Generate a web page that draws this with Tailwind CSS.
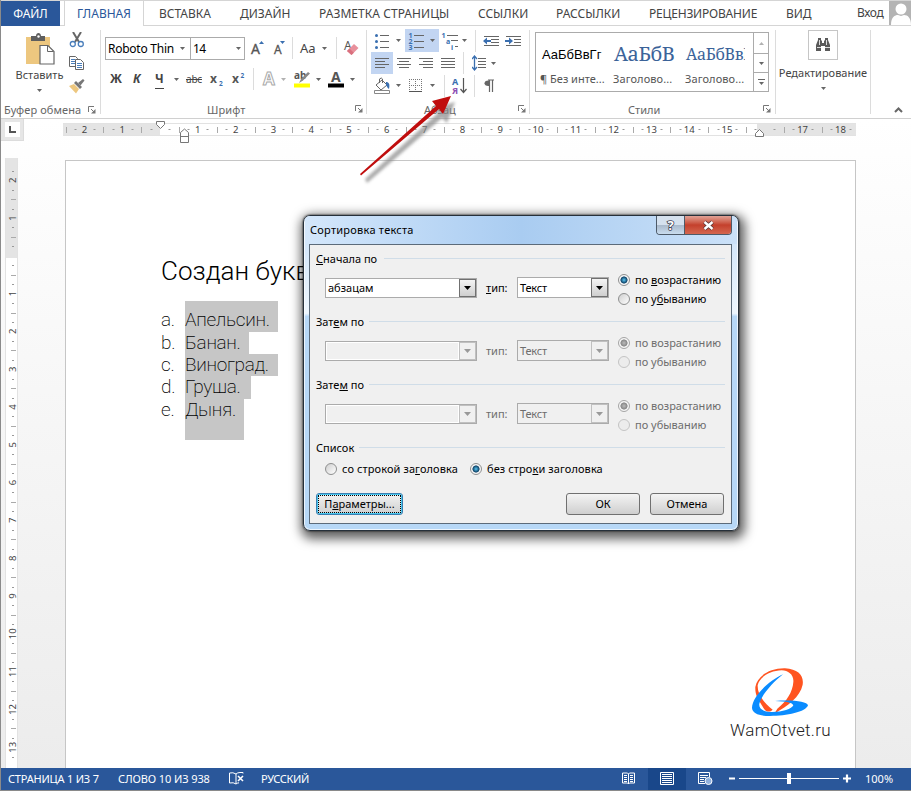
<!DOCTYPE html>
<html lang="ru">
<head>
<meta charset="utf-8">
<title>Word</title>
<script src="https://cdn.jsdelivr.net/npm/@tailwindcss/browser@4"></script>
</head>
<body class="w-[911px] h-[791px] overflow-hidden bg-white font-['Noto_Sans',sans-serif] text-[12px] leading-none text-[#444] whitespace-nowrap">
<svg width="0" height="0" class="absolute">
  <defs>
    <symbol id="dn" viewBox="0 0 5 3"><path d="M0 0h5L2.500 3z" fill="#666"/></symbol>
    <symbol id="launch" viewBox="0 0 8 8"><path d="M.5 6V.5H6M3 3l3 3" fill="none" stroke="#777"/><path d="M7.500 3v4.500H3z" fill="#777"/></symbol>
  </defs>
</svg>
<div class="relative flex flex-col w-full h-full border-l border-[#8a8a8a]">

  <!-- tabs -->
  <nav class="flex h-[26px] shrink-0 border-t border-[#d5d5d5]">
    <div class="flex items-center justify-center w-[59px] pt-px bg-[#2a579a] text-white">ФАЙЛ</div>
    <div class="w-[4px] border-b border-[#d5d5d5]"></div>
    <div class="flex items-center justify-center w-[80px] pt-px border-x border-[#d5d5d5] text-[#2a579a]">ГЛАВНАЯ</div>
    <div class="flex flex-1 items-center border-b border-[#d5d5d5] pl-[15px]">
      <div class="w-[81px] pt-px">ВСТАВКА</div>
      <div class="w-[79px] pt-px">ДИЗАЙН</div>
      <div class="w-[159px] pt-px tracking-[0.05px]">РАЗМЕТКА СТРАНИЦЫ</div>
      <div class="w-[78px] pt-px">ССЫЛКИ</div>
      <div class="w-[93px] pt-px">РАССЫЛКИ</div>
      <div class="w-[137px] pt-px tracking-[-0.2px]">РЕЦЕНЗИРОВАНИЕ</div>
      <div class="w-[71px] pt-px">ВИД</div>
      <div class="w-[32px] tracking-[-0.4px]">Вход</div>
      <svg width="22" height="24" viewBox="0 0 22 24"><path fill="#b4b4b4" d="M0 0h22v24H0z"/><circle cx="12" cy="8" r="5.500" fill="#fff"/><path d="M2 24c0-8 4-10 7-10l3 1 3-1c4 0 7 3 7 10z" fill="#fff"/></svg>
    </div>
  </nav>

  <!-- ribbon -->
  <section class="flex h-[93px] shrink-0 border-b border-[#d0d0d0] bg-white text-[11px]">
    <!-- clipboard -->
    <div class="flex flex-col w-[99px] pt-[6px]">
      <div class="flex h-[71px]">
        <div class="flex flex-col items-center w-[63px] pl-[14px]">
          <svg width="30" height="32" viewBox="0 0 30 32" class="mt-[1px]"><path d="M1 4h24v27H1z" fill="#edc77f"/><path d="M6 3h5c0-4 5-4 5 0h4v5H6z" fill="#5e5e5e"/><circle cx="13.500" cy="3.500" r="1.200" fill="#fff"/><path d="M15 12.500h8l6 6V31H15z" fill="#fff" stroke="#666" stroke-width="1.200"/><path d="M22.500 12.500v6h6" fill="none" stroke="#666"/></svg>
          <span class="mt-[4px]">Вставить</span>
          <svg width="5" height="3" class="mt-[9px]"><use href="#dn"/></svg>
        </div>
        <div class="flex flex-col items-center w-[26px] gap-[7px]">
          <svg width="16" height="16" viewBox="0 0 16 16"><path d="M4 0l6 10M12 0L6 10" stroke="#666" stroke-width="2" fill="none"/><circle cx="3.800" cy="12" r="2.500" fill="none" stroke="#4a7ebb" stroke-width="1.300"/><circle cx="11.800" cy="12" r="2.500" fill="none" stroke="#4a7ebb" stroke-width="1.300"/></svg>
          <svg width="16" height="16" viewBox="0 0 16 16"><path d="M.5 1.500h6l2 2v8h-8z" fill="#fff" stroke="#666"/><path d="M2 4.500h4M2 6.500h4M2 8.500h4" stroke="#4a7ebb"/><path d="M6.500 4.500h5l3 3v7h-8z" fill="#fff" stroke="#666"/><path d="M8 8.500h5M8 10.500h5M8 12.500h5" stroke="#4a7ebb"/></svg>
          <svg width="16" height="16" viewBox="0 0 16 16"><path d="M0 8l5-2 5 5-3 4.500z" fill="#edc77f"/><path d="M5 5l2-2 6 6-2 2z" fill="#777"/><path d="M9 5l5-4 1.500 1.500-4 5z" fill="#777"/></svg>
        </div>
      </div>
      <div class="flex items-center h-[13px] pl-[3px] text-[#666]"><div class="w-[84px] tracking-[0.1px]">Буфер обмена</div><svg width="8" height="8"><use href="#launch"/></svg></div>
    </div>
    <div class="w-px h-[84px] mt-[4px] bg-[#dcdcdc]"></div>

    <!-- font -->
    <div class="flex flex-col w-[265px]">
      <div class="flex items-center h-[44px] pl-[4px]">
        <div class="flex items-center w-[86px] h-[23px] border border-[#ababab] pl-[2px] pt-px text-[12px] tracking-[-0.25px] text-black"><div class="w-[72px]">Roboto Thin</div><svg width="5" height="3"><use href="#dn"/></svg></div>
        <div class="flex items-center w-[55px] h-[23px] -ml-px border border-[#ababab] pl-[2px] pt-px text-[12px] tracking-[-0.6px] text-black"><div class="w-[43px]">14</div><svg width="5" height="3"><use href="#dn"/></svg></div>
        <svg width="14" height="16" viewBox="0 0 14 16" class="ml-[6px] overflow-visible"><text x="0" y="14" font-size="14" fill="#555" stroke="#555" stroke-width=".3">A</text><path d="M8 4l2.500-3L13 4z" fill="#3a6fb0"/></svg>
        <svg width="14" height="16" viewBox="0 0 14 16" class="ml-[9px] overflow-visible"><text x="0" y="14" font-size="12" fill="#555" stroke="#555" stroke-width=".3">A</text><path d="M6 1h5L8.500 4z" fill="#3a6fb0"/></svg>
        <div class="w-px h-[22px] ml-[4px] bg-[#dcdcdc]"></div>
        <span class="ml-[7px] w-[22px] text-[13px]">Aa</span><svg width="5" height="3"><use href="#dn"/></svg>
        <div class="w-px h-[22px] ml-[9px] bg-[#dcdcdc]"></div>
        <svg width="15" height="16" viewBox="0 0 15 16" class="ml-[7px] overflow-visible"><text x="0" y="10" font-size="12" fill="#555">A</text><path d="M3 11l7-7 4.500 4-7 7z" fill="#e8909c"/><path d="M3 11l2.500-2.500 4.300 4.200L7.500 15z" fill="#d9707e"/></svg>
      </div>
      <div class="flex items-center h-[18px] pl-[9px] text-[13px]">
        <div class="w-[23px] font-bold text-[12px]">Ж</div>
        <div class="w-[22px] font-bold italic text-[12px]">К</div>
        <div class="w-[19px] font-bold text-[12px]"><span class="border-b border-[#444] pb-px">Ч</span></div>
        <svg width="5" height="3"><use href="#dn"/></svg>
        <div class="w-[24px] ml-[7px] text-[10px] tracking-[-0.2px] line-through">abc</div>
        <svg width="14" height="16" viewBox="0 0 14 16" class="overflow-visible"><text x="0" y="12" font-size="12" font-weight="bold" fill="#555">x</text><text x="9" y="15" font-size="6.500" font-weight="bold" fill="#3a6fb0">2</text></svg>
        <svg width="14" height="16" viewBox="0 0 14 16" class="ml-[8px] overflow-visible"><text x="0" y="12" font-size="12" font-weight="bold" fill="#555">x</text><text x="8.500" y="6.500" font-size="6.500" font-weight="bold" fill="#3a6fb0">2</text></svg>
        <div class="w-px h-[22px] ml-[7px] bg-[#dcdcdc]"></div>
        <svg width="14" height="18" viewBox="0 0 14 18" class="ml-[8px] overflow-visible"><text x="1" y="15" font-size="17" font-weight="bold" fill="#fff" stroke="#aaa" stroke-width="1">A</text></svg>
        <svg width="5" height="3" class="ml-[5px] opacity-50"><use href="#dn"/></svg>
        <svg width="17" height="18" viewBox="0 0 17 18" class="ml-[8px] overflow-visible"><text x="0" y="9" font-size="10" font-weight="bold" fill="#555">ab</text><path d="M5 13l2-4 7-7 2 1.500-7 7z" fill="#888"/><path d="M0 13.500h16v4H0z" fill="#ff0"/></svg>
        <svg width="5" height="3" class="ml-[5px]"><use href="#dn"/></svg>
        <svg width="16" height="18" viewBox="0 0 16 18" class="ml-[7px] overflow-visible"><text x="3" y="12" font-size="14" font-weight="bold" fill="#555">A</text><path d="M0 13.500h16v4H0z" fill="#000"/></svg>
        <svg width="5" height="3" class="ml-[6px]"><use href="#dn"/></svg>
      </div>
      <div class="flex items-center h-[14px] mt-[14px] pl-[106px] text-[#666]"><div class="w-[148px] tracking-[0.1px]">Шрифт</div><svg width="8" height="8"><use href="#launch"/></svg></div>
    </div>
    <div class="w-px h-[84px] mt-[4px] bg-[#dcdcdc]"></div>

    <!-- paragraph -->
    <div class="flex flex-col w-[162px] pt-[3px]">
      <div class="flex items-center h-[23px] pl-[8px]">
        <svg width="14" height="16" viewBox="0 0 14 16"><path d="M5 2.500h9M5 8.500h9M5 14.500h9" stroke="#666"/><circle cx="1.500" cy="2.500" r="1.500" fill="#3a6fb0"/><circle cx="1.500" cy="8.500" r="1.500" fill="#3a6fb0"/><circle cx="1.500" cy="14.500" r="1.500" fill="#3a6fb0"/></svg>
        <svg width="5" height="3" class="ml-[7px]"><use href="#dn"/></svg>
        <div class="flex items-center w-[34px] h-[23px] ml-[4px] pl-[4px] bg-[#c2d5f2]">
          <svg width="15" height="18" viewBox="0 0 15 18" class="overflow-visible"><path d="M5 3.500h10M5 9.500h10M5 15.500h10" stroke="#666"/><g font-size="7" font-weight="bold" fill="#3a6fb0"><text x="-.5" y="6">1</text><text x="-.5" y="12">2</text><text x="-.5" y="18">3</text></g></svg>
          <svg width="5" height="3" class="ml-[6px]"><use href="#dn"/></svg>
        </div>
        <svg width="18" height="18" viewBox="0 0 18 18" class="ml-[3px] overflow-visible"><path d="M5 3.500h11M9 8.500h7M13 14.500h3" stroke="#666"/><g font-size="7" font-weight="bold" fill="#3a6fb0"><text x="-.5" y="6">1</text><text x="4" y="12">a</text><text x="9" y="18">i</text></g></svg>
        <svg width="5" height="3" class="ml-[2px]"><use href="#dn"/></svg>
        <div class="w-px h-[22px] ml-[8px] bg-[#dcdcdc]"></div>
        <svg width="16" height="12" viewBox="0 0 16 12" class="ml-[7px]"><path d="M1 1.500h15M8 4.500h8M8 7.500h8M1 10.500h15" stroke="#666"/><path d="M0 6l4-3.500V5h4v2H4v2.500z" fill="#3a6fb0"/></svg>
        <svg width="16" height="12" viewBox="0 0 16 12" class="ml-[6px]"><path d="M1 1.500h15M9 4.500h7M9 7.500h7M1 10.500h15" stroke="#666"/><path d="M8 6L4 2.500V5H0v2h4v2.500z" fill="#3a6fb0"/></svg>
      </div>
      <div class="flex items-center h-[22px] pl-[4px]">
        <div class="flex items-center justify-center w-[22px] h-[22px] bg-[#c2d5f2]"><svg width="14" height="12" viewBox="0 0 14 12"><path d="M0 1.500h14M0 4.500h10M0 7.500h14M0 10.500h10" stroke="#666"/></svg></div>
        <svg width="14" height="12" viewBox="0 0 14 12" class="ml-[4px]"><path d="M0 1.500h14M2 4.500h10M0 7.500h14M2 10.500h10" stroke="#666"/></svg>
        <svg width="14" height="12" viewBox="0 0 14 12" class="ml-[8px]"><path d="M0 1.500h14M4 4.500h10M0 7.500h14M4 10.500h10" stroke="#666"/></svg>
        <svg width="14" height="12" viewBox="0 0 14 12" class="ml-[8px]"><path d="M0 1.500h14M0 4.500h14M0 7.500h14M0 10.500h14" stroke="#666"/></svg>
        <div class="w-px h-[22px] ml-[8px] bg-[#dcdcdc]"></div>
        <svg width="14" height="16" viewBox="0 0 14 16" class="ml-[8px]"><path d="M6 3.500h8M6 6.500h8M6 9.500h8M6 12.500h8" stroke="#666"/><path d="M2.500 1v14M0 4l2.500-3L5 4M0 12l2.500 3L5 12" fill="none" stroke="#3a6fb0" stroke-width="1.300"/></svg>
        <svg width="5" height="3" class="ml-[5px]"><use href="#dn"/></svg>
      </div>
      <div class="flex items-center h-[23px] pl-[7px]">
        <svg width="17" height="17" viewBox="0 0 17 17"><path d="M2 8l6-5 5 5-6 5z" fill="#fff" stroke="#666"/><path d="M5.500 6V2q2-2 3 0v4" fill="none" stroke="#666"/><path d="M12 5c3 0 4 2 3 7-2-1-2-3-3-4z" fill="#3a6fb0"/><path d="M.5 13.500h15v3H.5z" fill="#fff" stroke="#888"/></svg>
        <svg width="5" height="3" class="ml-[5px]"><use href="#dn"/></svg>
        <svg width="13" height="14" viewBox="0 0 13 14" class="ml-[8px]"><path d="M.5 0v12M6.500 0v12M12.500 0v12M0 .5h13M0 6.500h13" stroke="#777" stroke-dasharray="1 1" fill="none"/><path d="M0 12.500h13" stroke="#555"/></svg>
        <svg width="5" height="3" class="ml-[8px]"><use href="#dn"/></svg>
        <div class="w-px h-[22px] ml-[9px] bg-[#dcdcdc]"></div>
        <svg width="15" height="18" viewBox="0 0 15 18" class="ml-[7px] overflow-visible"><g font-size="9" font-weight="bold"><text x="0" y="8" fill="#3a6fb0">А</text><text x="0" y="16.500" fill="#8e4fb3">Я</text></g><path d="M11.500 1v14M8.500 12l3 3.500 3-3.500" fill="none" stroke="#555" stroke-width="1.200"/></svg>
        <div class="w-px h-[22px] ml-[7px] bg-[#dcdcdc]"></div>
        <svg width="10" height="14" viewBox="0 0 10 14" class="ml-[9px]"><path d="M5 1.500C-1 1-1 7.500 5 7z" fill="#666"/><path d="M4 1h6M5.500 1v12M8.500 1v12" stroke="#666" stroke-width="1.200"/></svg>
      </div>
      <div class="flex items-center h-[14px] mt-[5px] pl-[57px] text-[#666]"><div class="w-[94px]">Абзац</div><svg width="8" height="8"><use href="#launch"/></svg></div>
    </div>
    <div class="w-px h-[84px] mt-[4px] bg-[#dcdcdc]"></div>

    <!-- styles -->
    <div class="flex flex-col w-[245px] pt-[6px]">
      <div class="flex w-[234px] h-[60px] ml-[5px] border border-[#ababab] text-[#555]">
        <div class="w-[72px] pl-[4px]"><div class="h-[40px] pt-[15px] pl-[2px] font-['Liberation_Sans',sans-serif] text-[13px] text-black">АаБбВвГг</div>¶ Без инте...</div>
        <div class="w-[72px] pl-[5px]"><div class="h-[40px] pt-[11px] pl-[1px] font-['Noto_Serif','DejaVu_Serif',serif] text-[20px] tracking-[-0.5px] text-[#3b6399]">АаБбВ</div><span class="tracking-[0.1px]">Заголово...</span></div>
        <div class="w-[73px] pl-[5px]"><div class="h-[40px] pt-[13px] pl-[1px] w-[60px] overflow-hidden font-['Noto_Serif','DejaVu_Serif',serif] text-[16px] tracking-[-0.3px] text-[#3b6399]">АаБбВвГ</div><span class="tracking-[0.1px]">Заголово...</span></div>
        <div class="flex flex-col w-[15px] border-l border-[#ababab]">
          <div class="flex items-center justify-center h-[20px]"><svg width="5" height="3" class="rotate-180 opacity-50"><use href="#dn"/></svg></div>
          <div class="flex items-center justify-center h-[19px] border-t border-[#ababab]"><svg width="5" height="3"><use href="#dn"/></svg></div>
          <div class="flex flex-col items-center justify-center gap-[2px] h-[19px] border-t border-[#ababab]"><i class="w-[7px] h-px bg-[#666]"></i><svg width="5" height="3"><use href="#dn"/></svg></div>
        </div>
      </div>
      <div class="flex items-center h-[14px] mt-[10px] pl-[98px] text-[#666]"><div class="w-[135px]">Стили</div><svg width="8" height="8"><use href="#launch"/></svg></div>
    </div>
    <div class="w-px h-[84px] mt-[4px] bg-[#dcdcdc]"></div>

    <!-- editing -->
    <div class="flex flex-col items-center w-[94px] pt-[4px]">
      <div class="flex items-center justify-center w-[30px] h-[30px] border border-[#c6c6c6]"><svg width="16" height="14" viewBox="0 0 16 14"><path d="M3 0h3v2l1 1v2h2V3l1-1V0h3v2l2 5v6h-5V8H6v5H1V7l2-5z" fill="#5a5a5a"/><path d="M2 9.500h4M10 9.500h5M4.500 2v5M11.500 2v5" stroke="#fff" stroke-width=".8"/></svg></div>
      <span class="mt-[7px]">Редактирование</span>
      <svg width="5" height="3" class="mt-[9px]"><use href="#dn"/></svg>
    </div>
    <div class="w-px h-[84px] mt-[4px] bg-[#dcdcdc]"></div>
    <svg width="9" height="6" viewBox="0 0 9 6" class="mt-[81px] ml-[23px]"><path d="M1 5l3.500-3.500L8 5" fill="none" stroke="#666" stroke-width="2"/></svg>
  </section>

  <!-- workspace -->
  <main class="flex flex-1 flex-col min-h-0 bg-linear-to-b from-white to-[#ececec]">
    <div class="flex h-[26px] shrink-0">
      <div class="flex items-center justify-center w-[23px] h-[22px] border-b border-r border-[#dcdcdc] bg-[#e6e6e6]"><div class="flex items-center justify-center w-[15px] h-[15px] bg-white"><svg width="7" height="7" viewBox="0 0 7 7"><path d="M1 0v6h6" fill="none" stroke="#555" stroke-width="2"/></svg></div></div>
      <svg id="hruler" width="887" height="26" viewBox="24 119 887 26"></svg>
    </div>
    <div class="flex flex-1 min-h-0">
      <svg id="vruler" width="22" height="623" viewBox="1 145 22 623"></svg>
      <article class="w-[791px] h-[640px] ml-[42px] mt-[15px] border border-[#c6c6c6] bg-white font-['Roboto',sans-serif]">
        <h1 class="pt-[97px] pl-[95px] text-[26px] leading-[26px] font-light text-black">Создан буквенный</h1>
        <ol class="mt-[17px] pl-[95px] text-[19px] font-extralight tracking-[-0.3px] text-black">
          <li class="flex h-[31px] items-end"><span class="w-[24px] leading-[25px]">a.</span><span class="h-[31px] w-[93px] pt-[6px] leading-[25px] bg-[#c6c6c6]">Апельсин.</span></li>
          <li class="flex h-[22px] leading-[21px]"><span class="w-[24px]">b.</span><span class="w-[64px] bg-[#c6c6c6]">Банан.</span></li>
          <li class="flex h-[22px] leading-[21px]"><span class="w-[24px]">c.</span><span class="w-[93px] bg-[#c6c6c6]">Виноград.</span></li>
          <li class="flex h-[23px] leading-[21px]"><span class="w-[24px]">d.</span><span class="w-[66px] bg-[#c6c6c6]">Груша.</span></li>
          <li class="flex h-[41px] leading-[21px]"><span class="w-[24px]">e.</span><span class="w-[59px] bg-[#c6c6c6]">Дыня.</span></li>
        </ol>
        <figure class="mt-[227px] ml-[664px] w-[103px]">
          <svg width="60" height="50" viewBox="90 35 180 150" class="ml-[20px]"><path d="M158 163C150 172 138 170 132 160C112 130 105 118 106 95C112 62 150 38 195 39C235 42 252 60 248 88C240 125 205 150 163 175L172 160C200 138 218 110 220 80C222 58 205 46 185 45C150 46 118 65 113 90C112 115 128 140 158 163Z" fill="#ff5420"/><path d="M189 57C150 75 97 120 96 158C98 176 120 182 150 182C200 182 258 170 264 150C262 138 215 133 165 137C200 138 218 142 220 150C216 162 180 172 150 170C125 168 116 158 118 145C125 118 160 80 189 57Z" fill="#0a8cff"/></svg>
          <figcaption class="mt-[5px] text-[17px] font-light tracking-[0.3px] text-[#222]">WamOtvet.ru</figcaption>
        </figure>
      </article>
    </div>
  </main>

  <!-- status bar -->
  <footer class="flex items-center h-[23px] shrink-0 border-b border-[#8a8a8a] bg-[#2a579a] pl-[7px] pb-px text-[11px] text-white">
    <div class="w-[110px] tracking-[-0.2px]">СТРАНИЦА 1 ИЗ 7</div>
    <div class="w-[111px] tracking-[-0.1px]">СЛОВО 10 ИЗ 938</div>
    <svg width="15" height="13" viewBox="0 0 15 13"><path d="M7 2Q4 0 .5 1v10q4-1 6.500 1V2q1.500-1.500 4-1.500h3v1M7 12q1-1 3-1.200" fill="none" stroke="#fff"/><path d="M9 4l5 5M14 4L9 9" stroke="#fff" stroke-width="1.600"/></svg>
    <div class="w-[361px] ml-[17px] tracking-[-0.3px]">РУССКИЙ</div>
    <svg width="13" height="13" viewBox="0 0 13 13"><path d="M.5 1h5l1 1 1-1h5v10h-5l-1 1-1-1h-5zM6.500 2v10M2 3.500h3M2 5.500h3M2 7.500h3M2 9.500h3M8 3.500h3M8 5.500h3M8 7.500h3M8 9.500h3" fill="none" stroke="#fff"/></svg>
    <div class="flex items-center justify-center w-[38px] h-[22px] ml-[13px] bg-[#19478a]"><svg width="14" height="13" viewBox="0 0 14 13"><path d="M.5.5h13v12H.5zM2 2.500h10M2 4.500h10M2 6.500h10M2 8.500h10M2 10.500h10" fill="none" stroke="#fff"/></svg></div>
    <svg width="15" height="13" viewBox="0 0 15 13" class="ml-[12px]"><path d="M7 11.500H.5V.5h11V5M2 3.500h8M2 5.500h6M2 7.500h4M2 9.500h4" fill="none" stroke="#fff"/><circle cx="10.500" cy="9" r="3.500" fill="#8fb0dc" stroke="#fff"/></svg>
    <svg width="124" height="13" viewBox="0 0 124 13" class="ml-[16px]"><path d="M0 6.500h6M114 6.500h8M118 2.500v8" stroke="#fff" stroke-width="2.200"/><path d="M10 6.500h100" stroke="#fff"/><path d="M58 1h4v11h-4z" fill="#fff"/></svg>
    <div class="ml-[12px]">100%</div>
  </footer>

  <!-- pointer arrow -->
  <svg class="absolute left-[349px] top-[89px]" width="115" height="100" viewBox="350 89 115 100">
    <defs><filter id="b"><feGaussianBlur stdDeviation="1.600"/></filter></defs>
    <path d="M365 179L438 113L434 108L455 102L447 123L442 118L367 183z" fill="#888" opacity=".7" filter="url(#b)"/>
    <path d="M360 174L436 106L432 101L451 96L443 114L439 109L361 175.500z" fill="#c00d0d"/>
  </svg>

  <!-- sort dialog -->
  <div class="absolute left-[302px] top-[215px] flex flex-col w-[436px] h-[316px] rounded-[7px] border border-[#26303a] bg-linear-to-b from-[#c9e0f8] via-[#eef6fd] via-31% to-[#b7d8f7] to-32% shadow-[0_0_2px_#000,2px_4px_11px_4px_rgba(0,0,0,.62),inset_0_0_0_1px_rgba(255,255,255,.75)] text-[11px] text-black">
    <header class="flex h-[28px] shrink-0 pl-[5px] pr-[6px] m-px mb-0 -mt-0 rounded-t-[5px] bg-linear-to-r from-[#d4e7fb] via-[#a9ccf1] to-[#cbe1f8]">
      <div class="flex-1 pt-[8px] tracking-[0.25px]">Сортировка текста</div>
      <div class="flex h-[19px] -mr-px rounded-b-[4px] border border-t-0 border-[#4d5a68] overflow-hidden">
        <div class="flex items-center justify-center w-[28px] bg-linear-to-b from-[#d5e1ee] from-50% via-[#a9b9cb] via-50% to-[#c9dcee] border-r border-[#4d5a68]"><svg width="12" height="14" viewBox="0 0 12 14"><text x="2.500" y="12" font-size="13" font-weight="bold" fill="#fff" stroke="#445" stroke-width="1.600" paint-order="stroke">?</text></svg></div>
        <div class="flex items-center justify-center w-[46px] bg-linear-to-b from-[#e0a296] from-0% via-[#c4402c] via-50% to-[#d4664f]"><svg width="13" height="11" viewBox="0 0 13 11"><path d="M2.500 2l8 7M10.500 2l-8 7" stroke="#533" stroke-width="4"/><path d="M2.500 2l8 7M10.500 2l-8 7" stroke="#fff" stroke-width="2.400"/></svg></div>
      </div>
    </header>
    <div class="flex flex-col h-[280px] shrink-0 ml-[5px] mr-[6px] border border-[#5c6b7a] bg-[#f0f0f0] px-[6px]">
      <!-- key 1 -->
      <div class="flex items-center gap-[7px] h-[20px] mt-[3px]"><span><u>С</u>начала по</span><i class="flex-1 h-px bg-[#d0dde8]"></i></div>
      <div class="flex h-[43px] pl-[9px]">
        <div class="flex w-[152px] h-[20px] mt-[10px] border border-[#ababab] bg-white"><div class="flex-1 pl-[2px] pt-[3px]">абзацам</div><div class="flex items-center justify-center w-[17px] border border-[#707070] bg-linear-to-b from-[#f4f4f4] to-[#cfcfcf]"><svg width="7" height="4"><path d="M0 0h7L3.500 4z"/></svg></div></div>
        <div class="w-[40px] pl-[9px] pt-[14px]"><u>т</u>ип:</div>
        <div class="flex w-[92px] h-[21px] mt-[9px] border border-[#ababab] bg-white"><div class="flex-1 pl-[2px] pt-[4px] tracking-[-0.2px]">Текст</div><div class="flex items-center justify-center w-[17px] border border-[#707070] bg-linear-to-b from-[#f4f4f4] to-[#cfcfcf]"><svg width="7" height="4"><path d="M0 0h7L3.500 4z"/></svg></div></div>
        <div class="flex flex-col gap-[7px] pl-[9px] pt-[6px]">
          <div class="flex items-center gap-[5px] h-[12px]"><i class="w-[12px] h-[12px] rounded-full border border-[#8e8f8f] bg-radial from-[#5ac8f5] from-0% via-[#0f4468] via-45% to-[#f6f6f6] to-55%"></i><span class="pb-px">по <u>в</u>озрастанию</span></div>
          <div class="flex items-center gap-[5px] h-[12px]"><i class="w-[12px] h-[12px] rounded-full border border-[#8e8f8f] bg-linear-to-br from-[#cfcfcf] to-white"></i><span class="pb-px">по у<u>б</u>ыванию</span></div>
        </div>
      </div>
      <!-- key 2 -->
      <div class="flex items-center gap-[5px] h-[20px]"><span>Зат<u>е</u>м по</span><i class="flex-1 h-px bg-[#d0dde8]"></i></div>
      <div class="flex h-[43px] pl-[9px] text-[#6d6d6d]">
        <div class="flex w-[152px] h-[20px] mt-[10px] border border-[#ababab]"><div class="flex-1 border border-white"></div><div class="flex items-center justify-center w-[17px] border border-[#c0c0c0]"><svg width="7" height="4"><path d="M0 0h7L3.500 4z" fill="#999"/></svg></div></div>
        <div class="w-[40px] pl-[9px] pt-[14px]">тип:</div>
        <div class="flex w-[92px] h-[21px] mt-[9px] border border-[#ababab]"><div class="flex-1 pl-[2px] pt-[4px] tracking-[-0.2px]">Текст</div><div class="flex items-center justify-center w-[17px] border border-[#c0c0c0]"><svg width="7" height="4"><path d="M0 0h7L3.500 4z" fill="#999"/></svg></div></div>
        <div class="flex flex-col gap-[7px] pl-[9px] pt-[6px]">
          <div class="flex items-center gap-[5px] h-[12px]"><i class="w-[12px] h-[12px] rounded-full border border-[#a5a5a5] bg-radial from-[#bbb] from-0% via-[#888] via-45% to-[#f6f6f6] to-55%"></i><span class="pb-px">по возрастанию</span></div>
          <div class="flex items-center gap-[5px] h-[12px]"><i class="w-[12px] h-[12px] rounded-full border border-[#c4c4c4] bg-[#ececec]"></i><span class="pb-px">по убыванию</span></div>
        </div>
      </div>
      <!-- key 3 -->
      <div class="flex items-center gap-[5px] h-[20px]"><span>Зате<u>м</u> по</span><i class="flex-1 h-px bg-[#d0dde8]"></i></div>
      <div class="flex h-[43px] pl-[9px] text-[#6d6d6d]">
        <div class="flex w-[152px] h-[20px] mt-[10px] border border-[#ababab]"><div class="flex-1 border border-white"></div><div class="flex items-center justify-center w-[17px] border border-[#c0c0c0]"><svg width="7" height="4"><path d="M0 0h7L3.500 4z" fill="#999"/></svg></div></div>
        <div class="w-[40px] pl-[9px] pt-[14px]">тип:</div>
        <div class="flex w-[92px] h-[21px] mt-[9px] border border-[#ababab]"><div class="flex-1 pl-[2px] pt-[4px] tracking-[-0.2px]">Текст</div><div class="flex items-center justify-center w-[17px] border border-[#c0c0c0]"><svg width="7" height="4"><path d="M0 0h7L3.500 4z" fill="#999"/></svg></div></div>
        <div class="flex flex-col gap-[7px] pl-[9px] pt-[6px]">
          <div class="flex items-center gap-[5px] h-[12px]"><i class="w-[12px] h-[12px] rounded-full border border-[#a5a5a5] bg-radial from-[#bbb] from-0% via-[#888] via-45% to-[#f6f6f6] to-55%"></i><span class="pb-px">по возрастанию</span></div>
          <div class="flex items-center gap-[5px] h-[12px]"><i class="w-[12px] h-[12px] rounded-full border border-[#c4c4c4] bg-[#ececec]"></i><span class="pb-px">по убыванию</span></div>
        </div>
      </div>
      <!-- header row option -->
      <div class="flex items-center gap-[5px] h-[20px]"><span>Список</span><i class="flex-1 h-px bg-[#d0dde8]"></i></div>
      <div class="flex items-center h-[22px] mt-px pl-[9px] tracking-[0.1px]">
        <i class="w-[12px] h-[12px] rounded-full border border-[#8e8f8f] bg-linear-to-br from-[#cfcfcf] to-white"></i>
        <div class="w-[128px] ml-[5px] pb-px">со строкой за<u>г</u>оловка</div>
        <i class="w-[12px] h-[12px] rounded-full border border-[#8e8f8f] bg-radial from-[#5ac8f5] from-0% via-[#0f4468] via-45% to-[#f6f6f6] to-55%"></i>
        <div class="ml-[5px] pb-px">без стро<u>к</u>и заголовка</div>
      </div>
      <div class="flex h-[22px] mt-[13px]">
        <div class="w-[87px] h-[22px] rounded-[3px] border border-[#3c7fb1] p-[1px] bg-linear-to-b from-[#f2f2f2] to-[#cfcfcf] shadow-[inset_0_0_0_1px_#48c8f0]"><div class="flex items-center justify-center w-full h-full pb-px border border-dotted border-black"><span>П<u>а</u>раметры...</span></div></div>
        <div class="flex items-center justify-center w-[74px] h-[22px] ml-[163px] pb-px rounded-[3px] border border-[#707070] bg-linear-to-b from-[#f4f4f4] to-[#cfcfcf]">ОК</div>
        <div class="flex items-center justify-center w-[74px] h-[22px] ml-[10px] pb-px rounded-[3px] border border-[#707070] bg-linear-to-b from-[#f4f4f4] to-[#cfcfcf]">Отмена</div>
      </div>
    </div>
  </div>
</div>
<script>
  // Draws the two rulers: numbers on centimetres, lines on halves, dots on quarters.
  const pitch = 37.8;
  let h = '<path fill="#e4e4e4" d="M63 124h97v11H63zM757 124h99v11H757z"/><path fill="#fff" d="M160 124h597v11H160z"/><path d="M63 123.500h793M63 135.500h793" stroke="#e2e2e2"/>';
  for (let q = -10; q <= 73; q++) {
    const x = 160 + q * pitch / 4, n = Math.abs(q / 4);
    if (q % 4 === 0) { if (q !== 0 && n !== 16) h += `<text x="${x}" y="133" font-size="9.500" fill="#444" text-anchor="middle">${n}</text>`; }
    else h += q % 2 === 0 ? `<path d="M${Math.round(x) + .5} 127v6" stroke="#aaa"/>` : `<path d="M${Math.round(x) - .5} 129.500h2" stroke="#999"/>`;
  }
  h += '<path d="M156.500 121.500h8v3l-4 4-4-4zM180.500 142.500v-10l4-3.500 4 3.500v10zM180.500 136.500h8M755.500 136.500v-3l4-4 4 4v3z" fill="#fff" stroke="#777"/>';
  document.getElementById('hruler').innerHTML = h;
  let v = '<path fill="#e4e4e4" d="M5 158h13v100H5z"/><path fill="#fff" d="M5 258h13v510H5z"/><path d="M5.500 158v610M17.500 158v610" stroke="#e2e2e2"/>';
  for (let q = -9; q <= 53; q++) {
    const y = 255.800 + q * pitch / 4, n = Math.abs(q / 4);
    if (q % 4 === 0) { if (q !== 0) v += `<text transform="translate(16 ${y}) rotate(-90)" font-size="9.500" fill="#444" text-anchor="middle">${n}</text>`; }
    else v += q % 2 === 0 ? `<path d="M11 ${Math.round(y) + .5}h5" stroke="#aaa"/>` : `<path d="M12 ${Math.round(y) + .5}h2" stroke="#999"/>`;
  }
  document.getElementById('vruler').innerHTML = v;
</script>
</body>
</html>
